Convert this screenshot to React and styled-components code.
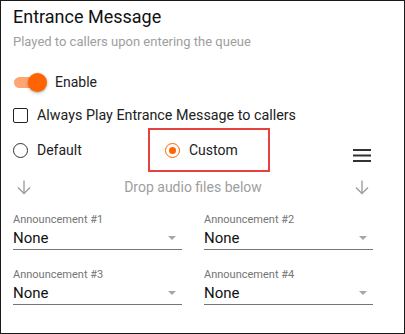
import React, { useState } from 'react';
import styled, { createGlobalStyle } from 'styled-components';

const GlobalStyle = createGlobalStyle`
  html, body {
    margin: 0;
    padding: 0;
    background: #ffffff;
  }
  * {
    box-sizing: border-box;
  }
`;

const Panel = styled.div`
  width: 405px;
  height: 334px;
  border: 1px solid #1a1a1a;
  padding: 4px 12px 0 12px;
  font-family: Roboto, 'Noto Sans', sans-serif;
  color: #212121;
  display: flex;
  flex-direction: column;
`;

const Title = styled.h2`
  margin: 0;
  font-size: 18px;
  font-weight: 400;
  line-height: 24px;
  color: #111111;
`;

const Subtitle = styled.p`
  margin: 4px 0 0 0;
  font-size: 13px;
  line-height: 18px;
  color: #9e9e9e;
`;

const Row = styled.div`
  display: flex;
  align-items: center;
  height: ${props => props.height || 24}px;
  margin-top: ${props => props.top || 0}px;
`;

const SwitchTrack = styled.div`
  position: relative;
  width: 32px;
  height: 11px;
  margin-left: 1px;
  border-radius: 6px;
  background: #ffa574;
  cursor: pointer;
`;

const SwitchThumb = styled.div`
  position: absolute;
  top: -4px;
  left: ${props => (props.on ? '14px' : '-2px')};
  width: 19px;
  height: 19px;
  border-radius: 50%;
  background: ${props => (props.on ? '#ff6400' : '#fafafa')};
  box-shadow: 0 1px 3px rgba(0, 0, 0, 0.35);
`;

const Label = styled.span`
  font-size: ${props => props.size || 14}px;
  color: #212121;
  margin-left: ${props => props.gap || 9}px;
`;

const CheckBox = styled.div`
  width: 15px;
  height: 15px;
  border: 1.5px solid #222222;
  border-radius: 2px;
`;

const RadioCircle = styled.div`
  width: 15px;
  height: 15px;
  border-radius: 50%;
  border: 1.5px solid ${props => (props.checked ? '#ff6400' : '#333333')};
  display: flex;
  align-items: center;
  justify-content: center;
  &::after {
    content: '';
    display: ${props => (props.checked ? 'block' : 'none')};
    width: 7px;
    height: 7px;
    border-radius: 50%;
    background: #ff6400;
  }
`;

const RadioOption = styled.div`
  display: flex;
  align-items: center;
  width: ${props => props.width}px;
`;

const Highlight = styled.div`
  display: flex;
  align-items: center;
  height: 44px;
  width: 122px;
  border: 2px solid #e5423f;
  padding-left: 15px;
  margin-left: 17px;
`;

const MenuButton = styled.div`
  margin-left: auto;
  margin-right: 21px;
  margin-top: 10px;
  display: flex;
`;

const DropRow = styled.div`
  display: flex;
  align-items: center;
  justify-content: space-between;
  height: 24px;
  margin-top: 3px;
  padding: 0 22px 0 3px;
  color: #9e9e9e;
  font-size: 14px;
`;

const Grid = styled.div`
  display: grid;
  grid-template-columns: 169px 169px;
  column-gap: 22px;
  row-gap: 18px;
  margin-top: 14px;
`;

const Field = styled.div`
  display: flex;
  flex-direction: column;
`;

const FieldLabel = styled.label`
  font-size: 11px;
  line-height: 13px;
  color: #757575;
`;

const Select = styled.div`
  display: flex;
  align-items: center;
  justify-content: space-between;
  height: 24px;
  border-bottom: 1px solid #757575;
  padding-right: 6px;
  font-size: 15px;
  color: #111111;
`;

const Caret = styled.span`
  width: 0;
  height: 0;
  border-left: 4px solid transparent;
  border-right: 4px solid transparent;
  border-top: 4px solid #a6a6a6;
  margin-top: 1px;
`;

const ArrowDown = () => (
  <svg width="16" height="16" viewBox="0 0 16 16" fill="none" stroke="#9e9e9e" strokeWidth="1.4">
    <path d="M8 1.5V14.5" />
    <path d="M2 8.5L8 14.5L14 8.5" />
  </svg>
);

const MenuIcon = () => (
  <svg width="18" height="13" viewBox="0 0 18 13" fill="#333333">
    <rect x="0" y="0" width="18" height="2" />
    <rect x="0" y="5.5" width="18" height="2" />
    <rect x="0" y="11" width="18" height="2" />
  </svg>
);

const announcements = ['Announcement #1', 'Announcement #2', 'Announcement #3', 'Announcement #4'];

export default function App() {
  const [enabled, setEnabled] = useState(true);
  const [mode, setMode] = useState('custom');

  return (
    <>
      <GlobalStyle />
      <Panel>
        <Title>Entrance Message</Title>
        <Subtitle>Played to callers upon entering the queue</Subtitle>

        <Row top={19}>
          <SwitchTrack onClick={() => setEnabled(!enabled)}>
            <SwitchThumb on={enabled} />
          </SwitchTrack>
          <Label gap={9}>Enable</Label>
        </Row>

        <Row top={9}>
          <CheckBox />
          <Label size={14.3}>Always Play Entrance Message to callers</Label>
        </Row>

        <Row height={44} top={1}>
          <RadioOption width={118} onClick={() => setMode('default')}>
            <RadioCircle checked={mode === 'default'} />
            <Label>Default</Label>
          </RadioOption>
          <Highlight onClick={() => setMode('custom')}>
            <RadioCircle checked={mode === 'custom'} />
            <Label>Custom</Label>
          </Highlight>
          <MenuButton>
            <MenuIcon />
          </MenuButton>
        </Row>

        <DropRow>
          <ArrowDown />
          <span>Drop audio files below</span>
          <ArrowDown />
        </DropRow>

        <Grid>
          {announcements.map(name => (
            <Field key={name}>
              <FieldLabel>{name}</FieldLabel>
              <Select>
                <span>None</span>
                <Caret />
              </Select>
            </Field>
          ))}
        </Grid>
      </Panel>
    </>
  );
}
